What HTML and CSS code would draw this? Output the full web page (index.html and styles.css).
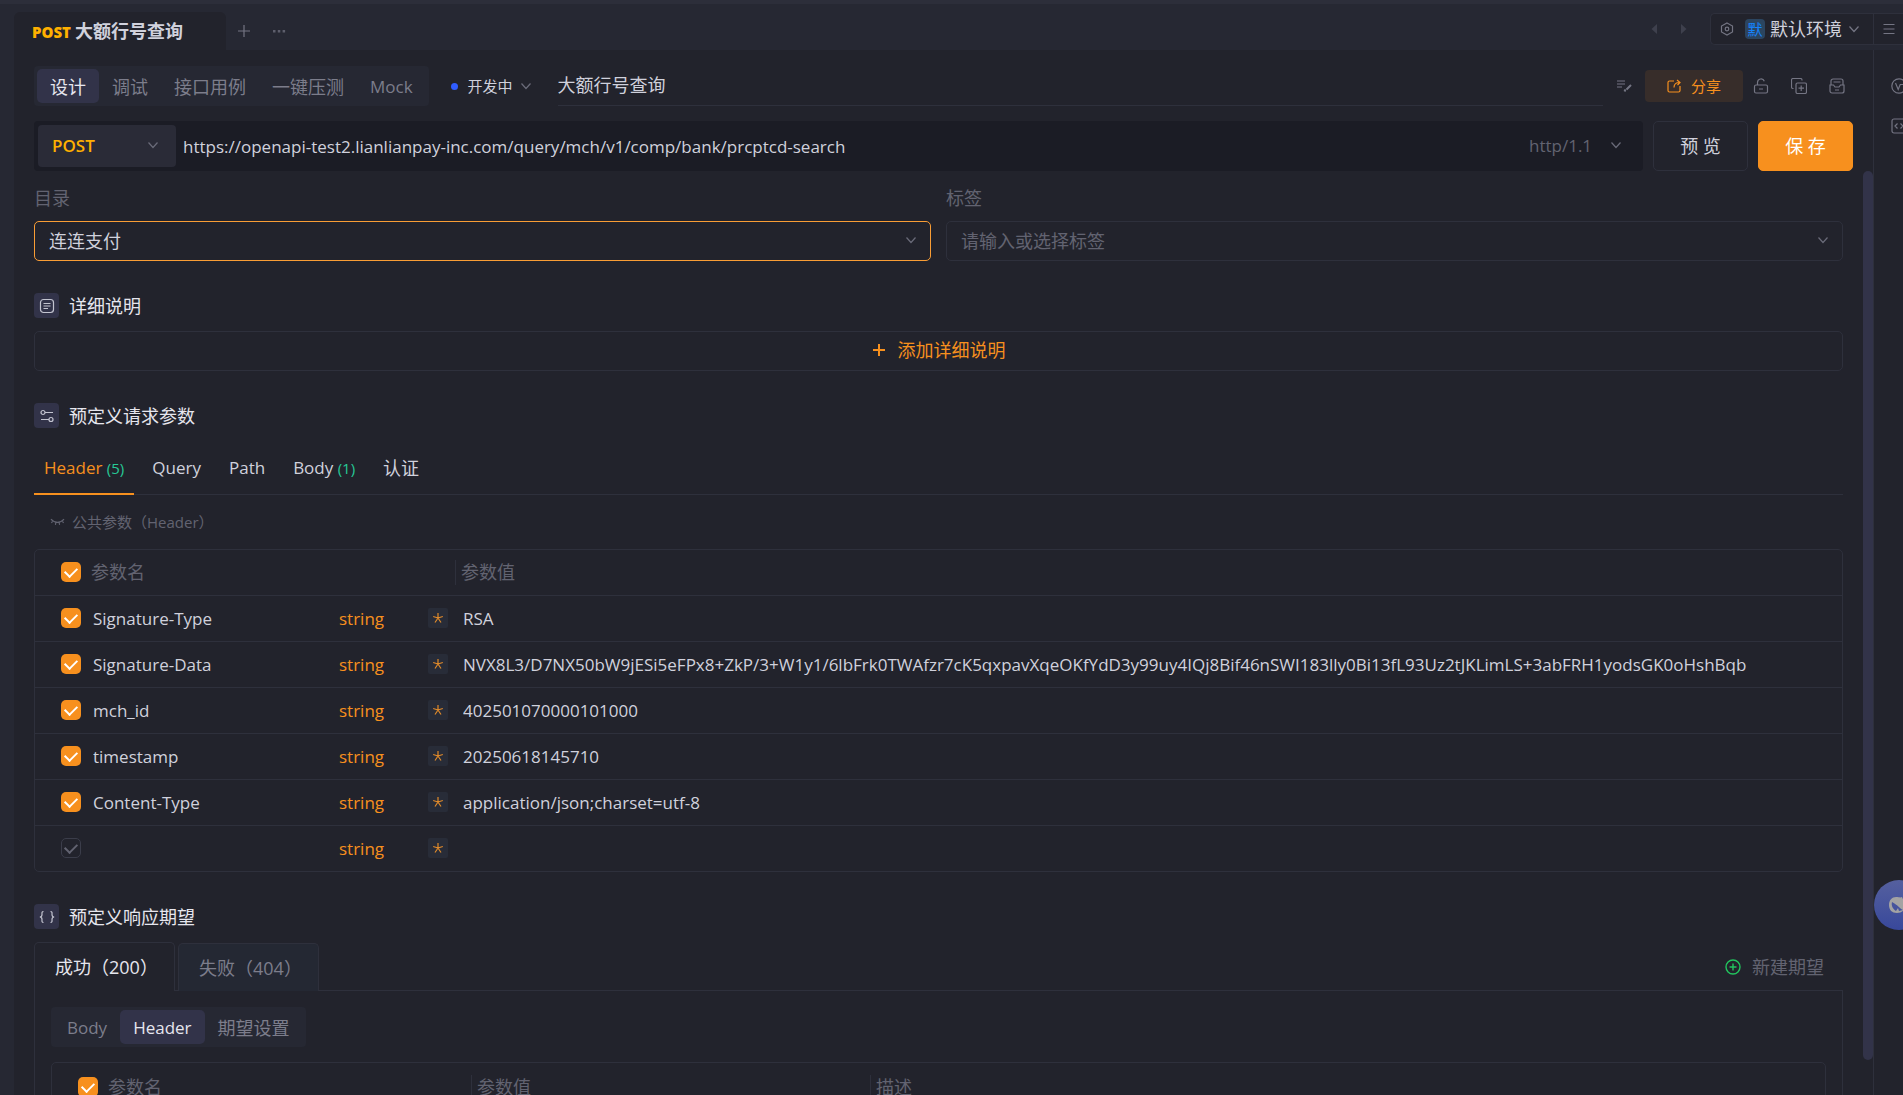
FILE: index.html
```html
<!DOCTYPE html>
<html lang="zh-CN">

<head>
    <meta charset="utf-8">
    <title>大额行号查询</title>
    <link rel="stylesheet" href="styles.css">
</head>

<body>
    <!-- 图标 -->
    <svg class="sprite" aria-hidden="true">
        <symbol id="i-down" viewBox="0 0 12 12"><path d="M1.5 3.5 6 8.5l4.500-5" /></symbol>
        <symbol id="i-plus" viewBox="0 0 14 14"><path d="M7 1v12M1 7h12" /></symbol>
        <symbol id="i-dots" viewBox="0 0 14 14"><path class="fill" d="M1 6h2.500v2.500H1zM5.800 6h2.500v2.500H5.800zM10.600 6h2.500v2.500h-2.500z" /></symbol>
        <symbol id="i-left" viewBox="0 0 12 12"><path class="fill" d="M9 1v10L3.500 6z" /></symbol>
        <symbol id="i-right" viewBox="0 0 12 12"><path class="fill" d="M3 1v10l5.500-5z" /></symbol>
        <symbol id="i-hex" viewBox="0 0 14 14"><path d="M7 1l5.500 3v6L7 13l-5.500-3V4z" /><circle cx="7" cy="7" r="1.800" /></symbol>
        <symbol id="i-menu" viewBox="0 0 14 14"><path d="M1.500 2.500h11M1.500 7h11M1.500 11.500h11" /></symbol>
        <symbol id="i-edit" viewBox="0 0 16 16"><path d="M1 3h8M1 6h8M1 9h5" /><path class="thick" d="M8.500 13.500l1-2.200M10.500 11.500L15 7" /></symbol>
        <symbol id="i-share" viewBox="0 0 14 14"><path d="M7 2H2.500A1.500 1.500 0 0 0 1 3.500v8A1.500 1.500 0 0 0 2.500 13h9a1.500 1.500 0 0 0 1.500-1.500V7M7 8.500C7 5 8.500 3.500 12.500 3.500M10 1l3 2.500L10.500 6" /></symbol>
        <symbol id="i-lock" viewBox="0 0 16 16"><rect x="1.500" y="7" width="13" height="8" rx="1.500" /><path d="M4.500 7V4.500a3.500 3.500 0 0 1 6.800-1.200M6 11h4" /></symbol>
        <symbol id="i-copy" viewBox="0 0 16 16"><rect x="5" y="5" width="10.500" height="10.500" rx="1.500" /><path d="M2.500 10.500h-.5A1.500 1.500 0 0 1 .5 9V2A1.500 1.500 0 0 1 2 .5h7.500A1.500 1.500 0 0 1 11 2v.5M10.200 7.500v5.500M7.500 10.200h5.500" /></symbol>
        <symbol id="i-inbox" viewBox="0 0 16 16"><path d="M2 7V3a2 2 0 0 1 2-2h8a2 2 0 0 1 2 2v4M4.500 4h7M1 7h3.500l1.500 2h4l1.500-2H15v6a2 2 0 0 1-2 2H3a2 2 0 0 1-2-2zM6 12h4" /></symbol>
        <symbol id="i-v" viewBox="0 0 16 16"><circle cx="8" cy="8" r="7.200" /><path d="M4.500 5l2.700 6.500 2-5h2.800" /></symbol>
        <symbol id="i-code" viewBox="0 0 16 16"><rect x="1" y="1" width="14" height="14" rx="2" /><path d="M6.500 5.500 4 8l2.500 2.500M9.500 5.500 12 8l-2.500 2.500" /></symbol>
        <symbol id="i-doc" viewBox="0 0 16 16"><rect x="1.500" y="1.500" width="13" height="13" rx="3" /><path d="M4.500 5.500h7M4.500 8h7M4.500 10.500h4.500" /></symbol>
        <symbol id="i-slider" viewBox="0 0 16 16"><circle cx="4" cy="4.500" r="2" /><path d="M6 4.500h8M2 11.500h8" /><circle cx="12" cy="11.500" r="2" /></symbol>
        <symbol id="i-brace" viewBox="0 0 16 16"><path d="M4.500 2.500C2.500 2.500 3 4 3 5.500S2.500 8 .8 8C2.500 8 3 9 3 10.500s-.5 3 1.500 3M11.500 2.500c2 0 1.500 1.500 1.500 3S13.500 8 15.200 8C13.500 8 13 9 13 10.500s.5 3-1.500 3" /></symbol>
        <symbol id="i-eye" viewBox="0 0 16 10"><path d="M1 2c4 4.500 10 4.500 14 0M3 4 1.500 6M6.300 5.200 5.800 8M9.700 5.200l.5 2.800M13 4l1.500 2" /></symbol>
        <symbol id="i-add" viewBox="0 0 16 16"><circle cx="8" cy="8" r="7" /><path d="M8 4.500v7M4.500 8h7" /></symbol>
        <symbol id="i-star" viewBox="0 0 12 12"><path d="M6 1v5M1.200 4.500 6 6M10.800 4.500 6 6M3 10.500 6 6M9 10.500 6 6" /></symbol>
    </svg>

    <header class="topbar">
        <a class="file-tab" href="#"><b>POST</b>大额行号查询</a>
        <button class="icon-btn" aria-label="新建"><svg class="s14"><use href="#i-plus" /></svg></button>
        <button class="icon-btn dots" aria-label="更多"><svg class="s14"><use href="#i-dots" /></svg></button>
        <div class="nav-arrows">
            <button class="icon-btn" aria-label="后退"><svg class="s12"><use href="#i-left" /></svg></button>
            <button class="icon-btn" aria-label="前进"><svg class="s12"><use href="#i-right" /></svg></button>
        </div>
        <div class="env">
            <button class="env-main">
                <svg class="s14"><use href="#i-hex" /></svg>
                <span class="env-badge">默</span>
                <span class="env-name">默认环境</span>
                <svg class="s12"><use href="#i-down" /></svg>
            </button>
            <button class="env-menu" aria-label="菜单"><svg class="s14"><use href="#i-menu" /></svg></button>
        </div>
    </header>

    <div class="workspace">
        <main>
            <div class="toolbar">
                <nav class="seg">
                    <a class="on" href="#">设计</a>
                    <a href="#">调试</a>
                    <a href="#">接口用例</a>
                    <a href="#">一键压测</a>
                    <a class="en" href="#">Mock</a>
                </nav>
                <button class="status"><i></i>开发中<svg class="s12"><use href="#i-down" /></svg></button>
                <input class="api-name" aria-label="接口名称" value="大额行号查询">
                <button class="icon-btn edit" aria-label="备注"><svg class="s16"><use href="#i-edit" /></svg></button>
                <button class="share"><svg class="s14"><use href="#i-share" /></svg>分享</button>
                <div class="tools">
                    <button class="icon-btn" aria-label="锁定"><svg class="s16"><use href="#i-lock" /></svg></button>
                    <button class="icon-btn" aria-label="复制"><svg class="s16"><use href="#i-copy" /></svg></button>
                    <button class="icon-btn" aria-label="归档"><svg class="s16"><use href="#i-inbox" /></svg></button>
                </div>
            </div>

            <div class="url-row">
                <div class="url-bar">
                    <div class="pick method">
                        <select aria-label="请求方法"><option>POST</option></select>
                        <svg class="s12"><use href="#i-down" /></svg>
                    </div>
                    <input class="url" aria-label="请求地址" value="https://openapi-test2.lianlianpay-inc.com/query/mch/v1/comp/bank/prcptcd-search">
                    <div class="pick proto">
                        <select aria-label="协议版本"><option>http/1.1</option></select>
                        <svg class="s12"><use href="#i-down" /></svg>
                    </div>
                </div>
                <button class="big">预 览</button>
                <button class="big save">保 存</button>
            </div>

            <div class="content">
                <div class="fields">
                    <div class="field">
                        <label for="dir">目录</label>
                        <div class="pick focus">
                            <select id="dir"><option>连连支付</option></select>
                            <svg class="s12"><use href="#i-down" /></svg>
                        </div>
                    </div>
                    <div class="field">
                        <label for="tag">标签</label>
                        <div class="pick empty">
                            <select id="tag"><option>请输入或选择标签</option></select>
                            <svg class="s12"><use href="#i-down" /></svg>
                        </div>
                    </div>
                </div>

                <h2><span><svg class="s16"><use href="#i-doc" /></svg></span>详细说明</h2>
                <button class="add-desc"><svg class="s14"><use href="#i-plus" /></svg>添加详细说明</button>

                <h2><span><svg class="s16"><use href="#i-slider" /></svg></span>预定义请求参数</h2>
                <nav class="tabs">
                    <a class="on" href="#">Header <em>(5)</em></a>
                    <a href="#">Query</a>
                    <a href="#">Path</a>
                    <a href="#">Body <em>(1)</em></a>
                    <a class="cn" href="#">认证</a>
                </nav>
                <button class="common"><svg><use href="#i-eye" /></svg>公共参数（Header）</button>

                <div class="table-box">
                    <table class="params">
                        <colgroup><col class="c-check"><col class="c-name"><col class="c-type"><col class="c-req"><col></colgroup>
                        <thead>
                            <tr>
                                <th><input type="checkbox" aria-label="全选" checked></th>
                                <th colspan="3">参数名</th>
                                <th class="bar">参数值</th>
                            </tr>
                        </thead>
                        <tbody>
                            <tr>
                                <td><input type="checkbox" aria-label="启用 Signature-Type" checked></td>
                                <td><input class="cell" aria-label="参数名" value="Signature-Type"></td>
                                <td class="type">string</td>
                                <td><button class="req" aria-label="必填"><svg class="s12"><use href="#i-star" /></svg></button></td>
                                <td><input class="cell" aria-label="参数值" value="RSA"></td>
                            </tr>
                            <tr>
                                <td><input type="checkbox" aria-label="启用 Signature-Data" checked></td>
                                <td><input class="cell" aria-label="参数名" value="Signature-Data"></td>
                                <td class="type">string</td>
                                <td><button class="req" aria-label="必填"><svg class="s12"><use href="#i-star" /></svg></button></td>
                                <td><input class="cell" aria-label="参数值" value="NVX8L3/D7NX50bW9jESi5eFPx8+ZkP/3+W1y1/6lbFrk0TWAfzr7cK5qxpavXqeOKfYdD3y99uy4IQj8Bif46nSWI183lly0Bi13fL93Uz2tJKLimLS+3abFRH1yodsGK0oHshBqbFj0"></td>
                            </tr>
                            <tr>
                                <td><input type="checkbox" aria-label="启用 mch_id" checked></td>
                                <td><input class="cell" aria-label="参数名" value="mch_id"></td>
                                <td class="type">string</td>
                                <td><button class="req" aria-label="必填"><svg class="s12"><use href="#i-star" /></svg></button></td>
                                <td><input class="cell" aria-label="参数值" value="402501070000101000"></td>
                            </tr>
                            <tr>
                                <td><input type="checkbox" aria-label="启用 timestamp" checked></td>
                                <td><input class="cell" aria-label="参数名" value="timestamp"></td>
                                <td class="type">string</td>
                                <td><button class="req" aria-label="必填"><svg class="s12"><use href="#i-star" /></svg></button></td>
                                <td><input class="cell" aria-label="参数值" value="20250618145710"></td>
                            </tr>
                            <tr>
                                <td><input type="checkbox" aria-label="启用 Content-Type" checked></td>
                                <td><input class="cell" aria-label="参数名" value="Content-Type"></td>
                                <td class="type">string</td>
                                <td><button class="req" aria-label="必填"><svg class="s12"><use href="#i-star" /></svg></button></td>
                                <td><input class="cell" aria-label="参数值" value="application/json;charset=utf-8"></td>
                            </tr>
                            <tr>
                                <td><input class="blank" type="checkbox" aria-label="启用新参数"></td>
                                <td><input class="cell" aria-label="参数名"></td>
                                <td class="type">string</td>
                                <td><button class="req" aria-label="必填"><svg class="s12"><use href="#i-star" /></svg></button></td>
                                <td><input class="cell" aria-label="参数值"></td>
                            </tr>
                        </tbody>
                    </table>
                </div>

                <h2><span><svg class="s16"><use href="#i-brace" /></svg></span>预定义响应期望</h2>
                <div class="res-tabs">
                    <a class="on" href="#">成功（200）</a>
                    <a href="#">失败（404）</a>
                    <button class="new-res"><svg class="s16"><use href="#i-add" /></svg>新建期望</button>
                </div>
                <div class="res-panel">
                    <nav class="seg">
                        <a class="en" href="#">Body</a>
                        <a class="en on" href="#">Header</a>
                        <a href="#">期望设置</a>
                    </nav>
                    <div class="table-box">
                        <table class="params">
                            <colgroup><col class="c-check"><col class="c-key"><col class="c-value"><col></colgroup>
                            <thead>
                                <tr>
                                    <th><input type="checkbox" aria-label="全选" checked></th>
                                    <th>参数名</th>
                                    <th class="bar">参数值</th>
                                    <th class="bar">描述</th>
                                </tr>
                            </thead>
                        </table>
                    </div>
                </div>
            </div>
            <div class="scrollbar"></div>
        </main>

        <aside>
            <button class="icon-btn" aria-label="版本"><svg class="s16"><use href="#i-v" /></svg></button>
            <button class="icon-btn" aria-label="代码"><svg class="s16"><use href="#i-code" /></svg></button>
        </aside>
    </div>

    <button class="ball" aria-label="助手">
        <svg viewBox="0 0 20 20"><path fill-rule="evenodd" d="M1 10C1 5 4 2 8 2c3 0 4 1 6 0 1 3 3 5 3 8 0 5-3 8-8 8s-8-3-8-8zm3-3c-1 4 1 7 4 9l2-3 1 3 4-1c-3-1-5-5-11-8z" /></svg>
    </button>
</body>

</html>
```

FILE: styles.css
```css
* {
    box-sizing: border-box;
}

html,
body {
    height: 100%;
    overflow: hidden;
}

body {
    display: flex;
    flex-direction: column;
    margin: 0;
    color: #d0d1dc;
    background: #262833;
    border-top: 4px solid #2c2e3a;
    font: 18px/24px "Open Sans", "Noto Sans CJK SC", sans-serif;
}

button,
input,
select {
    margin: 0;
    padding: 0;
    border: 0;
    color: inherit;
    background: none;
    font: inherit;
    outline: none;
}

button {
    cursor: pointer;
}

a {
    color: inherit;
    text-decoration: none;
}

svg {
    flex: none;
    fill: none;
    stroke: currentColor;
    stroke-width: 1.2;
}

.fill {
    fill: currentColor;
    stroke: none;
}

.thick {
    stroke-width: 2;
}

.sprite {
    display: none;
}

.s12 {
    width: 12px;
    height: 12px;
}

.s14 {
    width: 14px;
    height: 14px;
}

.s16 {
    width: 16px;
    height: 16px;
}

.icon-btn {
    display: flex;
    align-items: center;
    justify-content: center;
    color: #747583;
}

/* 顶部标签栏 */
.topbar {
    display: flex;
    flex: none;
    align-items: center;
    height: 46px;
    padding-left: 14px;
}

.file-tab {
    align-self: flex-end;
    width: 212px;
    height: 38px;
    margin-right: 11px;
    padding-left: 18px;
    border-radius: 6px 6px 0 0;
    background: #22232c;
    font-weight: 700;
    line-height: 38px;
}

.file-tab b {
    margin-right: 4px;
    color: #ffb000;
    font-size: 15px;
}

.topbar > .icon-btn {
    width: 14px;
    margin: 8px 21px 0 0;
}

.topbar > .dots {
    color: #5d5e6c;
}

.nav-arrows {
    display: flex;
    gap: 18px;
    margin: 0 20px 0 auto;
    padding-top: 3px;
}

.nav-arrows .icon-btn {
    color: #3e404d;
}

.env {
    display: flex;
    align-items: center;
    width: 193px;
    height: 32px;
    margin-top: 4px;
    border: 1px solid #2e303c;
    border-right: 0;
    border-radius: 5px 0 0 5px;
    background: #22232c;
}

.env-main {
    display: flex;
    align-items: center;
    width: 163px;
    height: 30px;
    padding-left: 9px;
    border-right: 1px solid #2e303c;
}

.env-main svg,
.env-menu {
    color: #747583;
}

.env-badge {
    width: 20px;
    height: 20px;
    margin: 0 5px 0 11px;
    border-radius: 4px;
    background: #2b4560;
    color: #1684fc;
    font-size: 15px;
    line-height: 20px;
}

.env-name {
    margin-right: 6px;
}

.env-menu {
    display: flex;
    padding-left: 8px;
}

/* 主体 */
.workspace {
    display: flex;
    flex: 1;
    min-height: 0;
    padding-left: 14px;
}

main {
    position: relative;
    flex: 1;
    min-width: 0;
    padding: 16px 20px 0;
    overflow: hidden;
    background: #22232c;
}

aside {
    display: flex;
    flex-direction: column;
    flex: none;
    align-items: flex-start;
    gap: 24px;
    width: 30px;
    padding: 28px 0 0 17px;
    overflow: hidden;
    border-left: 1px solid #2e303c;
    background: #22232c;
}

.toolbar,
.url-row,
.url-bar {
    display: flex;
    align-items: center;
}

.seg {
    display: flex;
    width: max-content;
    height: 40px;
    padding: 3px;
    border-radius: 4px;
    background: #262833;
    color: #7c7d8b;
}

.seg a {
    padding: 0 13px;
    border-radius: 5px;
    line-height: 36px;
}

.seg .on {
    background: #323349;
    color: #e6e6ee;
}

.en {
    font-size: 17px;
}

.status {
    display: flex;
    align-items: center;
    margin: 0 26px 0 22px;
    font-size: 15px;
}

.status i {
    width: 7px;
    height: 7px;
    margin-right: 10px;
    border-radius: 50%;
    background: #2f5cff;
}

.status svg {
    margin-left: 7px;
    color: #6a6b79;
}

.api-name {
    flex: 1;
    min-width: 0;
    height: 40px;
    padding-bottom: 3px;
    border-bottom: 1px solid #2e303c;
}

.edit {
    width: 16px;
    margin: 0 13px;
}

.share {
    display: flex;
    align-items: center;
    justify-content: center;
    gap: 10px;
    width: 98px;
    height: 32px;
    border-radius: 4px;
    background: #372d2a;
    color: #f7901e;
    font-size: 15px;
}

.tools {
    display: flex;
    gap: 22px;
    margin: 0 8px 0 10px;
}

.url-row {
    gap: 10px;
    margin-top: 15px;
}

.url-bar {
    flex: 1;
    height: 50px;
    padding-left: 4px;
    border-radius: 4px;
    background: #1b1c25;
}

.pick {
    position: relative;
}

.pick select {
    display: block;
    width: 100%;
    appearance: none;
}

.pick svg {
    position: absolute;
    top: 50%;
    right: 13px;
    margin-top: -7px;
    color: #6a6b79;
    pointer-events: none;
}

.method {
    width: 138px;
    border-radius: 4px;
    background: #2a2b37;
    color: #ffb000;
}

.method select {
    height: 42px;
    padding-left: 14px;
    font-size: 17px;
    font-weight: 600;
}

.pick.method svg {
    right: 17px;
}

.url {
    flex: 1;
    min-width: 0;
    height: 42px;
    padding-left: 7px;
    font-size: 17px;
}

.proto {
    width: 114px;
    color: #626371;
    font-size: 17px;
}

.pick.proto svg {
    right: 21px;
}

.big {
    width: 95px;
    height: 50px;
    border: 1px solid #2e303c;
    border-radius: 5px;
}

.save {
    border-color: #f7901e;
    background: #f7901e;
    color: #fff;
}

.content {
    margin-right: 10px;
}

.fields {
    display: flex;
    gap: 15px;
    margin-top: 15px;
}

.field {
    flex: 1;
}

.field label {
    display: block;
    margin-bottom: 11px;
    color: #626371;
}

.field .pick {
    border: 1px solid #2e303c;
    border-radius: 5px;
}

.field .focus {
    border-color: #f99d35;
}

.field select {
    height: 38px;
    padding-left: 14px;
}

.field .empty {
    color: #626371;
}

h2 {
    display: flex;
    align-items: center;
    gap: 10px;
    height: 25px;
    margin: 32px 0 13px;
    color: #e6e6ee;
    font-size: 18px;
    font-weight: 400;
    line-height: 22px;
}

h2 span {
    display: flex;
    align-items: center;
    justify-content: center;
    width: 25px;
    height: 25px;
    border-radius: 4px;
    background: #323349;
    color: #c3c4d0;
}

.add-desc {
    display: flex;
    align-items: center;
    justify-content: center;
    gap: 12px;
    width: 100%;
    height: 40px;
    padding-bottom: 2px;
    border: 1px solid #2e303c;
    border-radius: 5px;
    color: #f7901e;
}

.add-desc svg {
    stroke-width: 2;
}

.tabs {
    display: flex;
    gap: 8px;
    border-bottom: 1px solid #2e303c;
    font-size: 17px;
}

.tabs a {
    height: 54px;
    margin-bottom: -1px;
    padding: 0 10px;
    line-height: 54px;
}

.tabs .on {
    border-bottom: 2px solid #f7901e;
    color: #f7901e;
}

.tabs em {
    color: #26c996;
    font-size: 15px;
    font-style: normal;
}

.tabs .cn {
    font-size: 18px;
}

.common {
    display: flex;
    align-items: center;
    gap: 7px;
    margin: 15px 0 15px 16px;
    color: #626371;
    font-size: 15px;
}

.common svg {
    width: 15px;
    height: 10px;
}

/* 参数表格 */
.table-box {
    border: 1px solid #2e303c;
    border-radius: 5px;
}

.params {
    width: 100%;
    border-collapse: collapse;
    table-layout: fixed;
}

.c-check {
    width: 56px;
}

.c-name {
    width: 248px;
}

.c-type {
    width: 88px;
}

.c-req {
    width: 28px;
}

.params th,
.params td {
    height: 46px;
    padding: 0;
    text-align: left;
}

.params td {
    border-top: 1px solid #2e303c;
    font-size: 17px;
}

.params th {
    height: 45px;
    color: #626371;
    font-weight: 400;
}

.params th:first-child,
.params td:first-child {
    padding-left: 26px;
}

.bar {
    background: linear-gradient(#2e303c, #2e303c) no-repeat 0 50% / 1px 25px;
}

.params .bar {
    padding-left: 6px;
}

.cell {
    display: block;
    width: 200px;
    height: 32px;
    padding-left: 2px;
}

td:last-child .cell {
    width: calc(100% - 103px);
    padding: 0;
    margin-left: 8px;
}

.params .type {
    padding-top: 1px;
    color: #f7901e;
}

.req {
    display: flex;
    align-items: center;
    justify-content: center;
    width: 20px;
    height: 20px;
    margin-left: 1px;
    border-radius: 2px;
    background: #282c38;
    color: #e08a2a;
}

input[type="checkbox"] {
    display: flex;
    align-items: center;
    justify-content: center;
    width: 20px;
    height: 20px;
    border-radius: 5px;
    background: #f7901e;
    color: #fff;
    appearance: none;
}

input[type="checkbox"]::before {
    width: 6px;
    height: 10px;
    margin-top: -2px;
    border: solid;
    border-width: 0 2px 2px 0;
    content: "";
    transform: rotate(45deg);
}

input.blank {
    border: 1px solid #3b3d4a;
    background: none;
    color: #626371;
}

/* 响应期望 */
.res-tabs {
    display: flex;
    align-items: center;
    gap: 3px;
    height: 49px;
}

.res-tabs a {
    width: 141px;
    height: 48px;
    padding-left: 20px;
    border: 1px solid #2e303c;
    border-bottom: 0;
    border-radius: 5px 5px 0 0;
    background: #242833;
    color: #7c7d8b;
    line-height: 48px;
}

.res-tabs .on {
    z-index: 1;
    height: 49px;
    background: #22232c;
    color: #e6e6ee;
}

.new-res {
    display: flex;
    align-items: center;
    gap: 11px;
    margin-left: auto;
    margin-right: 19px;
    color: #626371;
}

.new-res svg {
    color: #22c55e;
    stroke-width: 1.4;
}

.res-panel {
    margin-top: -1px;
    padding: 16px 16px 40px;
    border: 1px solid #2e303c;
}

.res-panel .table-box {
    margin-top: 15px;
}

.res-panel th {
    height: 48px;
}

.c-key {
    width: 363px;
}

.c-value {
    width: 399px;
}

.scrollbar {
    position: absolute;
    top: 121px;
    right: 0;
    bottom: 35px;
    width: 10px;
    border-radius: 5px;
    background: #323349;
}

.ball {
    position: absolute;
    top: 880px;
    right: -21px;
    width: 50px;
    height: 50px;
    border-radius: 50%;
    background: linear-gradient(#55609f, #38489b);
}

.ball svg {
    display: block;
    width: 20px;
    height: 20px;
    margin-left: 14px;
    fill: #a3a3a3;
    stroke: none;
}
```
